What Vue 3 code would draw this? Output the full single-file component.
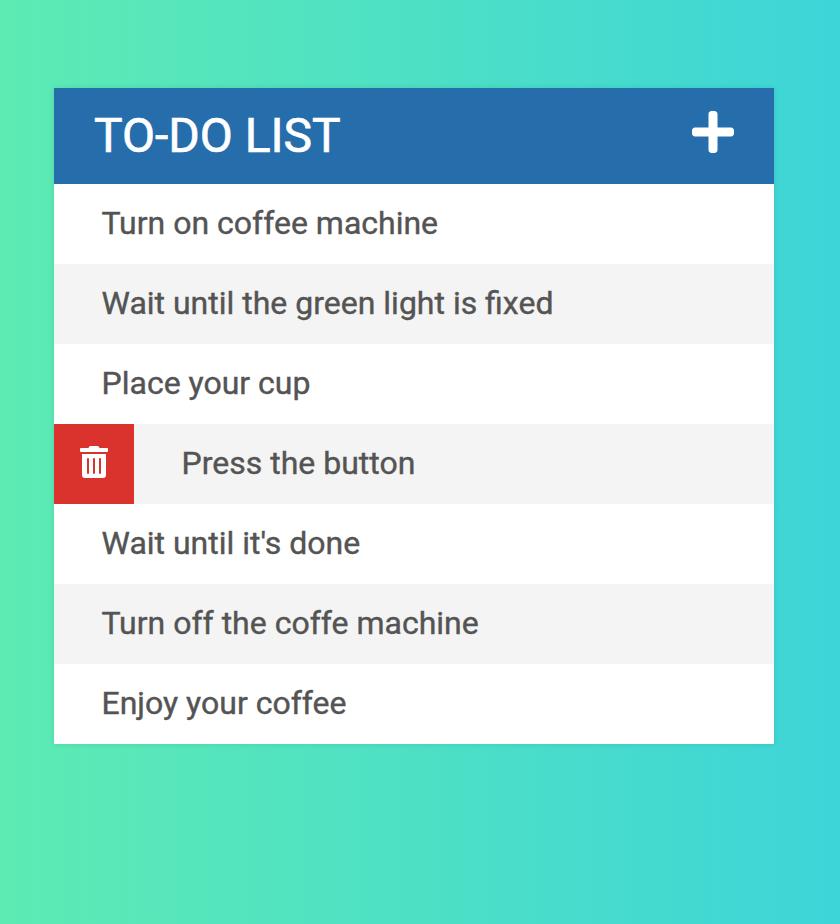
<script setup>
import { ref } from 'vue'

const todos = ref([
  { text: 'Turn on coffee machine' },
  { text: 'Wait until the green light is fixed' },
  { text: 'Place your cup' },
  { text: 'Press the button', active: true },
  { text: "Wait until it's done" },
  { text: 'Turn off the coffe machine' },
  { text: 'Enjoy your coffee' },
])
</script>

<template>
  <main class="page">
    <section class="card">
      <header class="head">
        <h1>TO-DO LIST</h1>
        <svg class="plus" viewBox="0 32 448 448"><path d="M416 208H272V64c0-17.670-14.330-32-32-32h-32c-17.670 0-32 14.330-32 32v144H32c-17.670 0-32 14.330-32 32v32c0 17.670 14.330 32 32 32h144v144c0 17.670 14.330 32 32 32h32c17.670 0 32-14.330 32-32V304h144c17.670 0 32-14.330 32-32v-32c0-17.670-14.330-32-32-32z" /></svg>
      </header>
      <ul>
        <li v-for="todo in todos" :key="todo.text">
          <span v-if="todo.active" class="trash">
            <svg viewBox="0 0 448 512"><path fill-rule="evenodd" d="M32 464a48 48 0 0 0 48 48h288a48 48 0 0 0 48-48V128H32zm272-256a16 16 0 0 1 32 0v224a16 16 0 0 1-32 0zm-96 0a16 16 0 0 1 32 0v224a16 16 0 0 1-32 0zm-96 0a16 16 0 0 1 32 0v224a16 16 0 0 1-32 0zM432 32H312l-9.400-18.700A24 24 0 0 0 281.100 0H166.800a23.700 23.700 0 0 0-21.400 13.300L136 32H16A16 16 0 0 0 0 48v32a16 16 0 0 0 16 16h416a16 16 0 0 0 16-16V48a16 16 0 0 0-16-16z" /></svg>
          </span>
          <span class="label">{{ todo.text }}</span>
        </li>
      </ul>
    </section>
  </main>
</template>

<style>
body { margin: 0; }
</style>

<style scoped>
.page {
  box-sizing: border-box;
  height: 924px;
  padding: 88px 66px 0 54px;
  background: linear-gradient(to right, #5debb3, #3dd5d8);
  font-family: Roboto, sans-serif;
}
.card {
  width: 720px;
  background: #fff;
  box-shadow: 0 0 6px rgba(0, 0, 0, 0.1);
}
.head {
  display: flex;
  align-items: center;
  justify-content: space-between;
  box-sizing: border-box;
  height: 96px;
  padding: 0 40px;
  background: #266dac;
  color: #fff;
}
h1 {
  margin: 0;
  font-size: 48px;
  font-weight: 400;
  line-height: 96px;
  -webkit-text-stroke: 0.7px currentColor;
}
.plus {
  width: 42px;
  height: 42px;
  margin-bottom: 8px;
  fill: #fff;
}
ul {
  margin: 0;
  padding: 0;
  list-style: none;
}
li {
  display: flex;
  height: 80px;
  color: #545454;
  font-size: 32px;
  line-height: 78px;
}
li:nth-child(even) { background: #f4f4f4; }
.label {
  padding-left: 47.5px;
  -webkit-text-stroke: 0.4px currentColor;
}
.trash {
  display: flex;
  align-items: center;
  justify-content: center;
  width: 80px;
  height: 80px;
  background: #da332e;
}
.trash svg {
  width: 28px;
  height: 32px;
  margin-bottom: 4px;
  fill: #fff;
}
</style>
